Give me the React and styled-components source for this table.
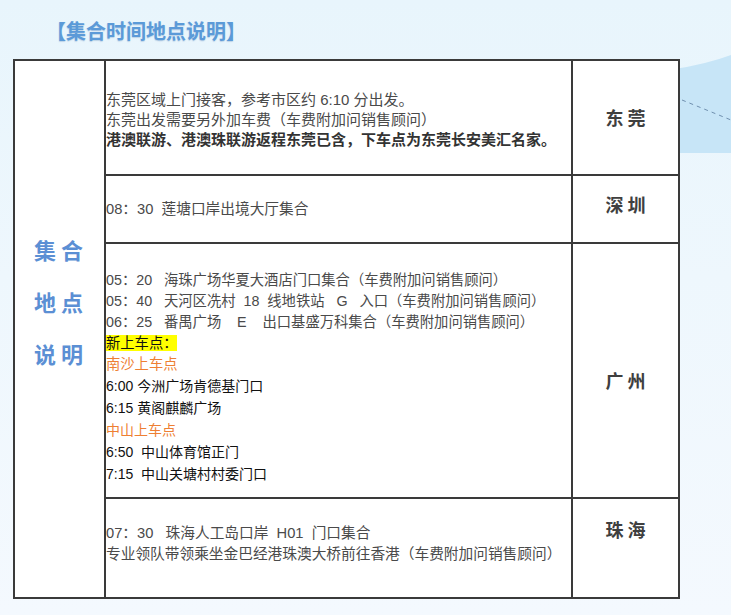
import styled, { createGlobalStyle } from "styled-components";

const GlobalStyle = createGlobalStyle`
    body {
        margin: 0;
        background: #eef7fd;
        font-family: "Liberation Sans", "Noto Sans CJK SC", sans-serif;
    }
`

const Page = styled.div`
    position: relative;
    width: 731px;
    height: 615px;
    overflow: hidden;
    background: linear-gradient(#e8f5fc 0%, #eef7fd 45%, #f4f9fe 100%);
    padding: 19px 0 0 13px;
    box-sizing: border-box;
`

const Decor = styled.svg`
    position: absolute;
    top: 0;
    left: 0;
    z-index: 0;
`

const Content = styled.div`
    position: relative;
    z-index: 1;
`

const Title = styled.h2`
    margin: 0 0 16px 33px;
    font-family: "Noto Sans CJK SC", sans-serif;
    font-size: 20px;
    line-height: 24px;
    font-weight: 700;
    color: #5b9ad8;
    text-shadow: 0 1px 1px rgba(60, 110, 170, 0.25);
`

const Table = styled.table`
    border-collapse: collapse;
    table-layout: fixed;
    width: 665px;
    background: #fff;
    border: 2px solid #3a3a3a;
`

const Row = styled.tr`
    height: ${({$h}) => $h}px;
`

const Cell = styled.td`
    border: 2px solid #3a3a3a;
    padding: ${({$top}) => $top}px 0 0 0;
    vertical-align: top;
`

const SideLabel = styled.div`
    font-family: "Noto Sans CJK SC", sans-serif;
    font-size: 22px;
    font-weight: 700;
    line-height: 52px;
    letter-spacing: 5px;
    padding-left: 3px;
    text-align: center;
    color: #5b8fd4;
`

const City = styled.div`
    font-family: "Noto Sans CJK SC", sans-serif;
    font-size: 18px;
    font-weight: 700;
    line-height: 22px;
    letter-spacing: 4px;
    padding-left: 4px;
    text-align: center;
    color: #3f3f3f;
`

const Line = styled.div`
    font-size: ${({$size}) => $size}px;
    line-height: ${({$lh}) => $lh}px;
    white-space: nowrap;
    color: ${({$tone}) => $tone === "dark" ? "#111" : $tone === "bold" ? "#333" : $tone === "orange" ? "#ee7f33" : "#4a4a4a"};
    font-weight: ${({$tone}) => $tone === "bold" ? 700 : 400};
`

const Mark = styled.span`
    background: #ffff00;
    color: #111;
`

const sp = (n) => "\u00a0".repeat(n)

const rows = [
    {
        h: 115, top: 29, cityTop: 45, city: "东莞", size: 15, lh: 20,
        lines: [
            { text: "东莞区域上门接客，参考市区约 6:10 分出发。" },
            { text: "东莞出发需要另外加车费（车费附加问销售顾问）" },
            { text: "港澳联游、港澳珠联游返程东莞已含，下车点为东莞长安美汇名家。", tone: "bold" },
        ],
    },
    {
        h: 68, top: 23, cityTop: 17, city: "深圳", size: 14.7, lh: 21,
        lines: [
            { text: `08：30${sp(2)}莲塘口岸出境大厅集合` },
        ],
    },
    {
        h: 255, top: 26, cityTop: 125, city: "广州", size: 14.3, lh: 21,
        lines: [
            { text: `05：20${sp(3)}海珠广场华夏大酒店门口集合（车费附加问销售顾问）` },
            { text: `05：40${sp(3)}天河区冼村${sp(2)}18${sp(2)}线地铁站${sp(3)}G${sp(3)}入口（车费附加问销售顾问）` },
            { text: `06：25${sp(3)}番禺广场${sp(4)}E${sp(4)}出口基盛万科集合（车费附加问销售顾问）` },
            { text: "新上车点：", mark: true },
            { text: "南沙上车点", tone: "orange" },
            { text: "6:00 今洲广场肯德基门口", tone: "dark", lh: 22, size: 14 },
            { text: "6:15 黄阁麒麟广场", tone: "dark", lh: 22, size: 14 },
            { text: "中山上车点", tone: "orange", lh: 22, size: 14 },
            { text: `6:50${sp(2)}中山体育馆正门`, tone: "dark", lh: 22, size: 14 },
            { text: `7:15${sp(2)}中山关塘村村委门口`, tone: "dark", lh: 22, size: 14 },
        ],
    },
    {
        h: 100, top: 24, cityTop: 19, city: "珠海", size: 14.7, lh: 21,
        lines: [
            { text: `07：30${sp(3)}珠海人工岛口岸${sp(2)}H01${sp(2)}门口集合` },
            { text: "专业领队带领乘坐金巴经港珠澳大桥前往香港（车费附加问销售顾问）" },
        ],
    },
]

function App() {
    return (
        <Page>
            <GlobalStyle />
            <Decor width="731" height="615" viewBox="0 0 731 615">
                <path d="M600 74 Q680 74 731 55 L731 153 L600 153 Z" fill="#c7e5f7" />
                <path d="M682 100 L731 120" stroke="#6f8fae" strokeWidth="1" strokeDasharray="4 4" fill="none" />
            </Decor>
            <Content>
                <Title>【集合时间地点说明】</Title>
                <Table>
                    <colgroup>
                        <col style={{ width: 91 }} />
                        <col style={{ width: 467 }} />
                        <col style={{ width: 107 }} />
                    </colgroup>
                    <tbody>
                        {rows.map((row, index) => (
                            <Row $h={row.h} key={index}>
                                {index === 0 && (
                                    <Cell rowSpan={4} $top={162}>
                                        <SideLabel>集合</SideLabel>
                                        <SideLabel>地点</SideLabel>
                                        <SideLabel>说明</SideLabel>
                                    </Cell>
                                )}
                                <Cell $top={row.top}>
                                    {row.lines.map((line, i) => (
                                        <Line key={i} $size={line.size || row.size} $lh={line.lh || row.lh} $tone={line.tone}>
                                            {line.mark ? <Mark>{line.text}</Mark> : line.text}
                                        </Line>
                                    ))}
                                </Cell>
                                <Cell $top={row.cityTop}>
                                    <City>{row.city}</City>
                                </Cell>
                            </Row>
                        ))}
                    </tbody>
                </Table>
            </Content>
        </Page>
    )
}

export default App;
